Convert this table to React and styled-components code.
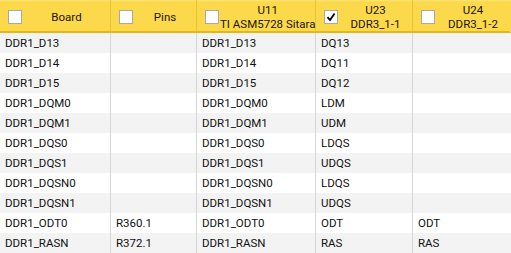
import React from "react";
import styled, { createGlobalStyle } from "styled-components";

const GlobalStyle = createGlobalStyle`
  html, body {
    margin: 0;
    padding: 0;
    background: #ffffff;
    overflow: hidden;
  }
  body {
    font-family: Roboto, "Noto Sans", sans-serif;
    font-size: 11.5px;
    color: #111;
  }
`;

const Table = styled.div`
  display: grid;
  grid-template-columns: 111px 86px 119px 97px 1fr;
  width: 511px;
`;

const HeadCell = styled.div`
  display: flex;
  align-items: center;
  box-sizing: border-box;
  height: 33px;
  padding: 2px 0 0 8px;
  background: linear-gradient(#fde47a 0, #fcd94a 2px, #fcd94a 100%);
  border-bottom: 2px solid #e3b714;
  border-right: 1px solid ${(p) => (p.$last ? "transparent" : "#e9c437")};
  color: #1c1406;
`;

const Box = styled.span`
  flex: none;
  width: 14px;
  height: 14px;
  box-sizing: border-box;
  border: 1px solid #a9a9a9;
  background: #fff;
  display: flex;
  align-items: center;
  justify-content: center;
`;

const Label = styled.div`
  flex: 1;
  text-align: center;
  line-height: 14px;
  white-space: nowrap;
  padding-left: 1px;
`;

const Cell = styled.div`
  height: 20px;
  line-height: 21px;
  padding-left: 5px;
  white-space: nowrap;
  overflow: hidden;
  background: ${(p) => (p.$odd ? "#f3f3f3" : "#ffffff")};
  border-right: 1px solid ${(p) => (p.$last ? "transparent" : "#d6d6d6")};
`;

const Check = () => (
  <svg width="10" height="10" viewBox="0 0 10 10">
    <path d="M1.5 5.2 L4 8 L8.6 1.5" fill="none" stroke="#000" strokeWidth="1.8" />
  </svg>
);

const headers = [
  { lines: ["Board"] },
  { lines: ["Pins"] },
  { lines: ["U11", "TI ASM5728 Sitara"] },
  { lines: ["U23", "DDR3_1-1"], checked: true },
  { lines: ["U24", "DDR3_1-2"] },
];

const rows = [
  ["DDR1_D13", "", "DDR1_D13", "DQ13", ""],
  ["DDR1_D14", "", "DDR1_D14", "DQ11", ""],
  ["DDR1_D15", "", "DDR1_D15", "DQ12", ""],
  ["DDR1_DQM0", "", "DDR1_DQM0", "LDM", ""],
  ["DDR1_DQM1", "", "DDR1_DQM1", "UDM", ""],
  ["DDR1_DQS0", "", "DDR1_DQS0", "LDQS", ""],
  ["DDR1_DQS1", "", "DDR1_DQS1", "UDQS", ""],
  ["DDR1_DQSN0", "", "DDR1_DQSN0", "LDQS", ""],
  ["DDR1_DQSN1", "", "DDR1_DQSN1", "UDQS", ""],
  ["DDR1_ODT0", "R360.1", "DDR1_ODT0", "ODT", "ODT"],
  ["DDR1_RASN", "R372.1", "DDR1_RASN", "RAS", "RAS"],
];

export default function App() {
  return (
    <>
      <GlobalStyle />
      <Table>
        {headers.map((h, i) => (
          <HeadCell key={i} $last={i === headers.length - 1}>
            <Box>{h.checked && <Check />}</Box>
            <Label>
              {h.lines.map((l, j) => (
                <div key={j}>{l}</div>
              ))}
            </Label>
          </HeadCell>
        ))}
        {rows.map((r, ri) =>
          r.map((c, ci) => (
            <Cell key={ri + "-" + ci} $odd={ri % 2 === 0} $last={ci === r.length - 1}>
              {c}
            </Cell>
          ))
        )}
      </Table>
    </>
  );
}
